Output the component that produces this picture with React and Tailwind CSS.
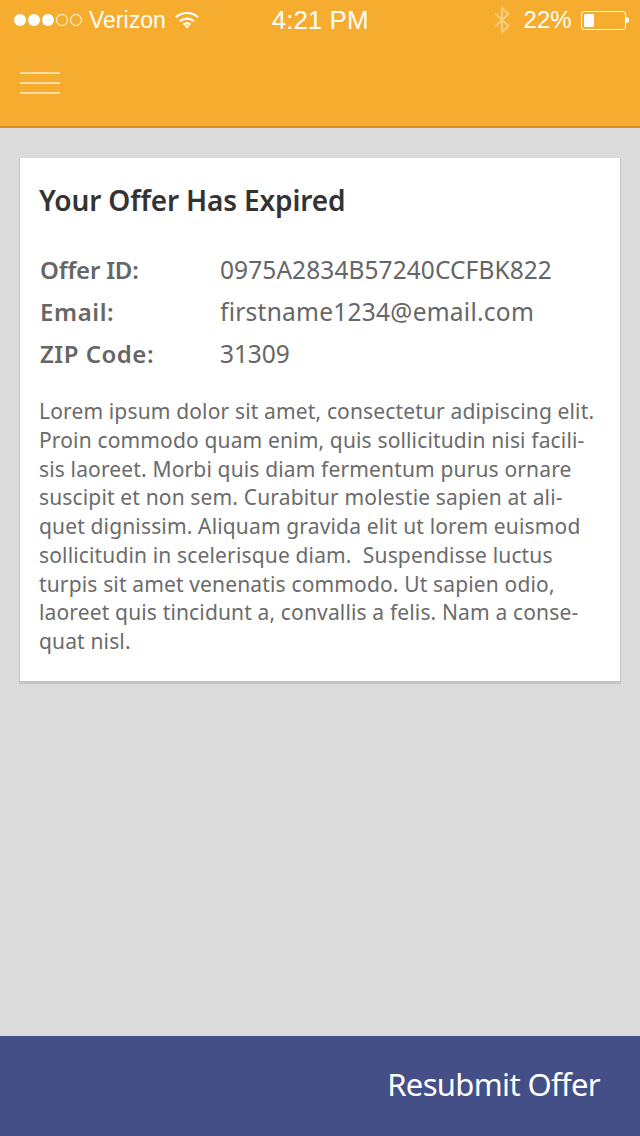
const lines = [
  "Lorem ipsum dolor sit amet, consectetur adipiscing elit.",
  "Proin commodo quam enim, quis sollicitudin nisi facili-",
  "sis laoreet. Morbi quis diam fermentum purus ornare",
  "suscipit et non sem. Curabitur molestie sapien at ali-",
  "quet dignissim. Aliquam gravida elit ut lorem euismod",
  "sollicitudin in scelerisque diam.  Suspendisse luctus",
  "turpis sit amet venenatis commodo. Ut sapien odio,",
  "laoreet quis tincidunt a, convallis a felis. Nam a conse-",
  "quat nisl.",
];

const rows = [
  { k: "Offer ID:", v: "0975A2834B57240CCFBK822", kc: "tracking-[-0.2px]", vc: "tracking-[0.08px]" },
  { k: "Email:", v: "firstname1234@email.com", kc: "tracking-[0.6px]", vc: "tracking-[0.25px]" },
  { k: "ZIP Code:", v: "31309", kc: "tracking-[0.5px]", vc: "tracking-[-0.1px]" },
];

function Wifi() {
  return (
    <svg width="24" height="20" viewBox="0 0 24 20" fill="none" stroke="white" strokeWidth="2.2">
      <path d="M1 7.2C7.2 1.6 16.8 1.6 23 7.2" />
      <path d="M5 11.2C9 7.8 15 7.8 19 11.2" />
      <path d="M8.6 14.6C10.6 13 13.4 13 15.4 14.6" />
      <path d="M9.6 15.8L12 18.6L14.4 15.8C13 14.6 11 14.6 9.6 15.8Z" fill="white" stroke="none" />
    </svg>
  );
}

function Bluetooth() {
  return (
    <svg width="18" height="28" viewBox="0 0 18 28" fill="none" stroke="white" strokeOpacity="0.4" strokeWidth="2">
      <path d="M2 7.5L15.5 20L9 26V2L15.5 8L2 20.5" />
    </svg>
  );
}

export default function App() {
  return (
    <div className="flex flex-col h-[1136px] w-[640px] bg-[#dbdbdb] overflow-hidden font-['Noto_Sans',sans-serif]">
      <header className="h-[128px] shrink-0 bg-[#f6ac2e] border-b-2 border-[#d68f1f] flex flex-col">
        <div className="h-[40px] flex items-center relative text-white font-['Liberation_Sans',sans-serif] text-[25px] font-normal">
          <div className="flex items-center gap-[2px] ml-[14px]">
            <span className="w-[12px] h-[12px] rounded-full bg-white" />
            <span className="w-[12px] h-[12px] rounded-full bg-white" />
            <span className="w-[12px] h-[12px] rounded-full bg-white" />
            <span className="w-[12px] h-[12px] rounded-full border border-white" />
            <span className="w-[12px] h-[12px] rounded-full border border-white" />
          </div>
          <span className="ml-[7px] text-[23px] leading-none">Verizon</span>
          <span className="ml-[9px] flex"><Wifi /></span>
          <span className="ml-[73px] text-[26px] leading-none whitespace-nowrap">4:21 PM</span>
          <span className="ml-[124px] flex"><Bluetooth /></span>
          <span className="ml-[13px] text-[24px] leading-none">22%</span>
          <div className="ml-[9px] flex items-center">
            <div className="w-[45px] h-[19px] rounded-[3px] border border-white p-[2px]">
              <div className="h-full w-[10px] bg-white rounded-[1px]" />
            </div>
            <div className="w-[3px] h-[6px] bg-white rounded-r-full" />
          </div>
        </div>
        <div className="flex-1 flex flex-col gap-[8px] pl-[20px] pt-[32px]">
          <div className="w-[40px] h-[2px] bg-[#fbdc9f]" />
          <div className="w-[40px] h-[2px] bg-[#fbdc9f]" />
          <div className="w-[40px] h-[2px] bg-[#fbdc9f]" />
        </div>
      </header>

      <main className="flex-1 px-[20px] pt-[30px]">
        <section className="h-[523px] bg-white shadow-[0_2px_0_1px_#c4c4c4] pl-[19px] pt-[24px]">
          <h1 className="text-[28px] leading-[36px] font-semibold text-[#333333] tracking-[-0.15px]">Your Offer Has Expired</h1>
          <div className="mt-[31px] ml-[1px] flex flex-col">
            {rows.map(({ k, v, kc, vc }) => (
              <div key={k} className="flex h-[42px] items-center">
                <span className={`w-[180px] text-[24px] font-semibold text-[#666666] ${kc}`}>{k}</span>
                <span className={`text-[#666666] font-normal text-[24.5px] ${vc}`}>{v}</span>
              </div>
            ))}
          </div>
          <div className="mt-[22px] text-[#6b6b6b] text-[21px] leading-[28.75px] tracking-[0.15px] whitespace-pre">
            {lines.map((l) => (
              <div key={l}>{l}</div>
            ))}
          </div>
        </section>
      </main>

      <footer className="h-[100px] shrink-0 bg-[#444f88] flex items-center justify-end pr-[40px] pb-[4px] text-white text-[31px] tracking-[-0.65px]">
        Resubmit Offer
      </footer>
    </div>
  );
}
